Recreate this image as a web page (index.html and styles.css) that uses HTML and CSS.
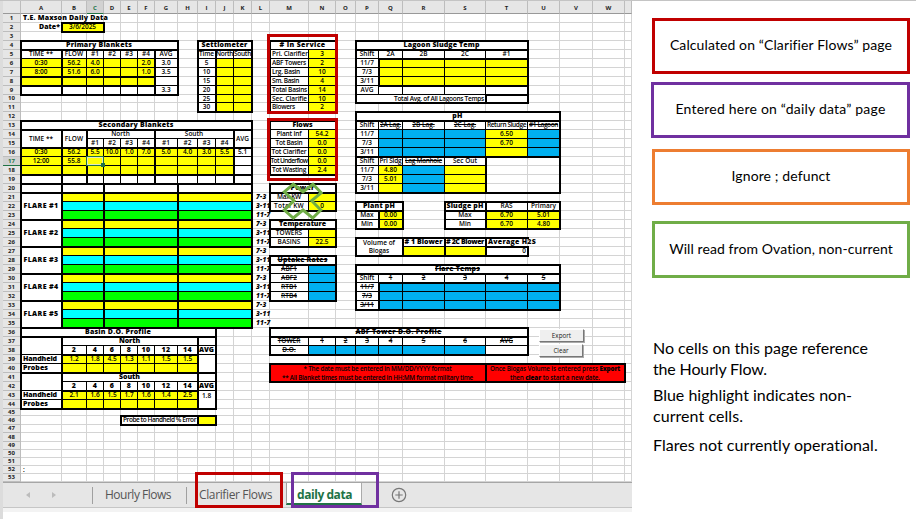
FILE: index.html
```html
<!DOCTYPE html>
<html lang="en">
<head>
<meta charset="utf-8">
<title>Daily data</title>
<link rel="stylesheet" href="styles.css">
</head>
<body>
<div class="page">
  <main class="workbook">
    <div class="sheet" id="sheet"></div>
    <div class="tabs">
      <span class="arrow prev"></span><span class="arrow next"></span>
      <span class="tab hourly"><span data-w="66">Hourly Flows</span></span>
      <span class="tab clarifier"><span data-w="73">Clarifier Flows</span></span>
      <span class="tab active"><span data-w="55">daily data</span></span>
      <svg class="add" width="16" height="16" viewBox="0 0 16 16"><circle cx="8" cy="8" r="6.7"/><path d="M8 4.3v7.4M4.3 8h7.4"/></svg>
    </div>
    <div class="foot"></div>
    <button class="btn export">Export</button>
    <button class="btn clear">Clear</button>
    <div class="mark service"></div>
    <div class="mark flows"></div>
    <div class="mark tab-red"></div>
    <div class="mark tab-purple"></div>
    <svg class="cross" width="42" height="40" viewBox="0 0 42 40"><path d="M3.3 11.8 12.3 4.2 22 11.8 32 4.2 40.2 12.8 30.7 20.7 39.8 30 31.7 38 22 30 12.3 38 3.3 30 13 20.7Z"/></svg>
  </main>
  <aside class="notes">
    <div class="key red"><span data-w="222">Calculated on “Clarifier Flows” page</span></div>
    <div class="key purple"><span data-w="210">Entered here on “daily data” page</span></div>
    <div class="key orange"><span data-w="99">Ignore ; defunct</span></div>
    <div class="key green"><span data-w="224">Will read from Ovation, non-current</span></div>
    <p class="n1"><span data-w="215">No cells on this page reference</span><br><span data-w="114">the Hourly Flow.</span></p>
    <p class="n2"><span data-w="199">Blue highlight indicates non-</span><br><span data-w="90">current cells.</span></p>
    <p class="n3"><span data-w="225">Flares not currently operational.</span></p>
  </aside>
</div>
<script src="sheet.js"></script>
</body>
</html>
```
FILE: styles.css
```css
* { box-sizing: border-box; }
body { margin: 0; background: #fff; font-family: "Open Sans", "Liberation Sans", sans-serif; color: #000; }
.page { display: flex; width: 916px; height: 519px; overflow: hidden; border-top: 1px solid #c4c4c4; }
.workbook { position: relative; width: 632px; height: 518px; flex: none; border-left: 3px solid #dcdcdc; }

.sheet { display: grid; width: 629px; height: 481px; overflow: hidden; font-size: 6.5px; line-height: 8px; font-weight: 600; }
.grid { background: #fff; border: 0 solid #d4d4d4; border-width: 0 1px 1px 0; }
.head { background: #e6e6e6; border: 0 solid #bdbdbd; border-width: 0 1px 1px 0; display: flex; align-items: center; justify-content: center; font-weight: 700; font-size: 6px; line-height: 7px; color: #222; }
.head.col { padding-top: 3px; border-bottom-color: #999; }
.head.on { background: #d2d2d2; color: #217346; border-color: #217346; }
.head.col.on { border-right-color: #bdbdbd; }
.c { display: flex; align-items: center; justify-content: center; text-align: center; margin: -1px 0 0 -1px; border: 1px solid #000; background: #fff; white-space: nowrap; overflow: hidden; min-width: 0; min-height: 0; }
.y { background: #ff0; }
.u { background: #00b0f0; }
.q { background: #0ff; }
.g { background: #0f0; }
.r { background: #f00; }
.b { font-weight: 800; font-size: 7px; letter-spacing: .3px; }
.s { text-decoration: line-through; }
.i { font-style: italic; font-weight: 800; }
.l { justify-content: flex-start; text-align: left; padding-left: 2px; }
.e { justify-content: flex-end; padding-right: 1px; }
.n { border-color: transparent; background: transparent; overflow: visible; }
.shift { padding-left: 4px; letter-spacing: .3px; }
.wrap { line-height: 8px; white-space: pre; }
.note { flex-direction: column; line-height: 9px; font-size: 6.3px; }
.box { border: 2px solid #000; margin: -1px; z-index: 1; }
.top { border-top: 2px solid #000; margin: -1px; z-index: 1; }
.sel { border: 1px solid #217346; margin: -1px 0 0 -1px; z-index: 2; position: relative; box-shadow: inset 0 0 0 1px #dfe8c0; }
.sel::after { content: ""; position: absolute; right: -2px; bottom: -2px; width: 4px; height: 4px; background: #217346; }

.tabs { display: flex; align-items: center; height: 26px; width: 629px; background: #e6e6e6; border-top: 1px solid #a6a6a6; border-bottom: 1px solid #c6c6c6; font-size: 12px; color: #555; position: relative; }
.tab { display: flex; align-items: center; height: 17px; white-space: nowrap; border-left: 1px solid #a0a0a0; }
.arrow { width: 0; height: 0; border: 3.5px solid transparent; }
.prev { border-right: 4px solid #bcbcbc; border-left: 0; margin-left: 23px; }
.next { border-left: 4px solid #bcbcbc; border-right: 0; margin-left: 22px; }
.hourly { margin-left: 36px; width: 94px; padding: 0 0 2px 12px; }
.clarifier { width: 98px; padding: 0 0 2px 12px; }
.active { margin-left: 2px; width: 76px; height: 22px; align-self: flex-start; background: #fff; color: #217346; font-weight: 700; border-bottom: 2px solid #217346; border-right: 1px solid #aaa; padding: 3px 0 0 10px; }
.add { margin-left: 29px; fill: none; stroke: #777; stroke-width: 1.2; }
.foot { height: 4px; width: 629px; background: #f3f3f3; }

.btn { position: absolute; left: 536px; width: 45px; height: 13px; padding: 0; background: #efefef; border: 1px solid #fff; border-right-color: #777; border-bottom-color: #777; box-shadow: 1px 1px 0 #aaa; font: 6.3px/10px "Open Sans", sans-serif; color: #222; z-index: 3; }
.export { top: 328px; }
.clear { top: 343px; width: 44px; }
.mark { position: absolute; border: 3px solid #c00000; z-index: 4; }
.service { left: 264px; top: 33px; width: 71px; height: 80px; }
.flows { left: 264px; top: 117px; width: 71px; height: 63px; }
.tab-red { left: 192px; top: 471px; width: 88px; height: 36px; }
.tab-purple { left: 288px; top: 471px; width: 88px; height: 36px; border-color: #7030a0; }
.cross { position: absolute; left: 278px; top: 179px; z-index: 4; fill: none; stroke: #70ad47; stroke-width: 3; }

.notes { width: 284px; padding: 17px 0 0 19px; font-family: Lato, "Open Sans", sans-serif; }
.key { display: flex; align-items: center; justify-content: center; width: 258px; height: 56px; margin-left: 1px; padding-bottom: 3px; border: 3px solid #c00000; font-size: 14px; white-space: nowrap; }
.purple { width: 259px; margin: 8px 0 0; border-color: #7030a0; }
.orange { margin-top: 11px; border-color: #ed7d31; }
.green { height: 57px; margin-top: 16px; border-color: #70ad47; }
.notes p { margin: 0 0 0 2px; font-size: 16px; line-height: 21px; white-space: nowrap; }
.notes .n1 { margin-top: 59px; }
.notes .n2 { margin-top: 5px; }
.notes .n3 { margin-top: 8px; }
```
FILE: sheet.js
```js
const colEdges = [3, 21, 62, 87, 104, 121, 138, 155, 178, 198, 216, 234, 252, 270, 309, 336, 356, 379, 403, 445, 486, 528, 560, 593, 625, 632];
const rowEdges = [1, 14, 23, 32, 41, 50, 59, 68, 77, 86, 95, 103, 112, 121, 130, 139, 148, 157, 166, 175, 184, 193, 202, 211, 220, 229, 238, 247, 256, 265, 274, 283, 292, 301, 310, 319, 328, 337, 346, 355, 364, 373, 382, 391, 400, 409, 416, 425, 433, 442, 450, 458, 466, 474, 482];
const sheet = document.getElementById('sheet');
const sizes = edges => edges.slice(1).map((v, i) => v - edges[i] + 'px').join(' ');
sheet.style.gridTemplateColumns = sizes(colEdges);
sheet.style.gridTemplateRows = sizes(rowEdges);
const L = 'ABCDEFGHIJKLMNOPQRSTUVWX';

function add(r1, c1, r2, c2, cls, text, w) {
  const d = document.createElement('div');
  d.className = cls;
  d.style.gridArea = `${r1 + 1}/${c1 + 1}/${r2 + 2}/${c2 + 2}`;
  if (text) {
    const lines = Array.isArray(w) ? text.split('\n') : [text];
    lines.forEach((line, i) => {
      const s = document.createElement('span');
      s.innerHTML = line;
      const width = Array.isArray(w) ? w[i] : w;
      if (width) s.dataset.w = width;
      d.append(s);
    });
  }
  sheet.append(d);
}
const ref = s => [+s.slice(1), L.indexOf(s[0]) + 1];
function put(range, cls, text, w) {
  const [a, b = a] = range.split(':');
  const [r1, c1] = ref(a), [r2, c2] = ref(b);
  add(r1, c1, r2, c2, cls, text, w);
}
const cell = (range, text, cls = '', w) => put(range, 'c ' + cls, text, w);
const box = (...ranges) => ranges.forEach(r => put(r, 'box'));
// Consecutive cells of one row, starting at the given cell
function row(start, texts, cls = '') {
  const [r, c] = ref(start);
  texts.forEach((t, i) => add(r, c + i, r, c + i, 'c ' + cls, t));
}
function column(start, texts, cls = '', widths = []) {
  const [r, c] = ref(start);
  texts.forEach((t, i) => add(r + i, c, r + i, c, 'c ' + cls, t, widths[i]));
}

for (let r = 0; r <= 53; r++) for (let c = 0; c <= 24; c++) {
  if (!r) add(r, c, r, c, 'head col' + (c === 3 ? ' on' : ''), c && c < 24 ? L[c - 1] : '');
  else if (!c) add(r, c, r, c, 'head' + (r === 17 ? ' on' : ''), String(r));
  else add(r, c, r, c, 'grid');
}

cell('A1:D1', 'T.E. Maxson Daily Data', 'n b l', 85);
cell('A2', 'Date*', 'n b e', 21);
cell('B2:C2', '3/6/2025', 'y', 27); box('B2:C2');
cell('A52', ':', 'n l');

cell('A4:G4', 'Primary Blankets', 'b', 66);
row('A5', ['TIME **', 'FLOW', '#1', '#2', '#3', '#4', 'AVG']);
row('A6', ['0:30', '56.2', '4.0', '', '', '2.0'], 'y');
row('A7', ['8:00', '51.6', '6.0', '', '', '1.0'], 'y');
row('A8', ['', '', '', '', '', ''], 'y');
row('A9', ['', '', '', '', '', '']);
column('G6', ['3.0', '3.5', '', '3.3']);
box('A4:G4', 'A5:G9', 'A5:A9', 'G5:G9', 'A8:F8');

cell('I4:K4', 'Settlometer', 'b', 46);
column('I5', ['Time', '5', '10', '15', '20', '25', '30'], '', [15]);
column('J5', ['North'], '', [17]); column('K5', ['South'], '', [17]);
['J6', 'K6'].forEach(s => column(s, ['', '', '', '', '', ''], 'y'));
box('I4:K4', 'I5:K11', 'I5:I11');

cell('M4:N4', '# In Service', 'b', 46);
column('M5', ['Pri. Clarifier', 'ABF Towers', 'Lrg. Basin', 'Sm. Basin', 'Total Basins', 'Sec. Clarifie', 'Blowers'], 'l', [36, 34, 28, 27, 35, 35, 23]);
column('N5', ['3', '2', '10', '4', '14', '10', '2'], 'y');
box('M4:N11');

cell('P4:T4', 'Lagoon Sludge Temp', 'b', 76);
row('P5', ['Shift', '2A', '2B', '2C', '#1']);
column('P6', ['11/7', '7/3', '3/11', 'AVG']);
for (const r of [6, 7, 8]) row('Q' + r, ['', '', '', ''], 'y');
row('Q9', ['', '', '', '']);
cell('P10:S10', 'Total Avg. of All Lagoons Temps', 'e', 90);
cell('T10', '');
box('P4:T4', 'P5:T10', 'Q6:T8', 'T10');

cell('P12:U12', 'pH', 'b');
row('P13', ['Shift']);
column('Q13', ['2A Lag.'], 's', [21]); row('R13', ['2B Lag.', '2C Lag.'], 's');
cell('T13', 'Return Sludge', '', 39);
cell('U13', '#1 Lagoon', 's', 29);
column('P14', ['11/7', '7/3', '3/11', 'Shift', '11/7', '7/3', '3/11']);
for (const r of [14, 15, 16]) { row('Q' + r, ['', '', ''], 'u'); cell('U' + r, '', 'u'); }
column('T14', ['6.50', '6.70', ''], 'y');
cell('Q17', 'Pri Sldg', '', 22); cell('R17', 'Lag Manhole', 's', 37); cell('S17', 'Sec Out', '', 24);
column('Q18', ['4.80', '5.01', ''], 'y');
column('R18', ['', '', ''], 'u');
column('S18', ['', '', ''], 'y');
box('P12:U12', 'P13:U20', 'P17:S20', 'P13:U16');

cell('A13:K13', 'Secondary Blankets', 'b', 75);
cell('A14:A15', 'TIME **'); cell('B14:B15', 'FLOW');
cell('C14:F14', 'North'); cell('G14:J14', 'South'); cell('K14:K15', 'AVG');
row('C15', ['#1', '#2', '#3', '#4', '#1', '#2', '#3', '#4']);
row('A16', ['0:30', '56.2', '5.5', '10.0', '1.0', '7.0', '5.0', '4.0', '3.0', '5.5'], 'y');
row('A17', ['12:00', '55.8', '', '', '', '', '', '', '', ''], 'y');
row('A18', ['', '', '', '', '', '', '', '', '', ''], 'y');
row('A19', ['', '', '', '', '', '', '', '', '', '']);
column('K16', ['5.1', '', '', '']);
box('A13:K13', 'A14:K19', 'A14:A19', 'C14:F19', 'K14:K19', 'A16:K18');
put('C17', 'sel');

['A20', 'B20:C20', 'D20:G20', 'H20:K20'].forEach(r => cell(r, ''));
const shifts = ['7-3', '3-11', '11-7'];
for (let f = 0; f < 5; f++) {
  const r = 21 + f * 3;
  cell(`A${r}:A${r + 2}`, 'FLARE #' + (f + 1), 'b', 35);
  ['y', 'q', 'g'].forEach((k, i) => {
    ['B#:C#', 'D#:G#', 'H#:K#'].forEach(t => cell(t.replace(/#/g, r + i), '', k));
    cell(`L${r + i}`, shifts[i], 'n i l shift');
  });
  box(`A${r}:K${r + 2}`);
}
box('A20:K20', 'B20:C35', 'D20:G35', 'H20:K35');

cell('M13:N13', 'Flows', 'b', 20);
column('M14', ['Plant Inf', 'Tot Basin', 'Tot Clarifier', 'Tot Underflow', 'Tot Wasting'], '', [25, 27, 35, 37, 34]);
column('N14', ['54.2', '0.0', '0.0', '0.0', '2.4'], 'y');
box('M13:N18');
cell('M20:N20', 'Power', 'b', 24);
column('M21', ['Max KW', 'Total KW'], '', [24, 30]); column('N21', ['', '0'], 'y');
box('M20:N20', 'M21:N22');
cell('M24:N24', 'Temperature', 'b', 47);
column('M25', ['TOWERS', 'BASINS']); column('N25', ['', '22.5'], 'y');
box('M24:N24', 'M25:N26');
cell('M28:N28', 'Uptake Rates', 'b s', 50);
column('M29', ['ABF1', 'ABF2', 'RTB1', 'RTB4'], 's'); column('N29', ['', '', '', ''], 'u');
box('M28:N28', 'M29:N32');

cell('P22:Q22', 'Plant pH', 'b', 32);
column('P23', ['Max', 'Min']); column('Q23', ['0.00', '0.00'], 'y');
box('P22:Q22', 'P23:Q24', 'Q23:Q24');
cell('S22', 'Sludge pH', 'b', 37); cell('T22', 'RAS'); cell('U22', 'Primary');
row('S23', ['Max']); row('T23', ['6.70', '5.01'], 'y');
row('S24', ['Min']); row('T24', ['6.70', '4.80'], 'y');
box('S22:U24', 'T23:U24', 'S22');

cell('P26:Q27', 'Volume of\nBiogas', 'wrap');
cell('R26', '# 1 Blower', 'b', 38); cell('S26', '# 2C Blower', 'b', 38);
cell('T26:U26', 'Average H2S', 'n b l', 48);
row('R27', ['', ''], 'y'); cell('T27', '0', 'e');
box('P26:Q27', 'R26:R27', 'S26:S27', 'T27');
put('T26', 'top');

cell('P29:U29', 'Flare Temps', 'b s', 45);
row('P30', ['Shift']); row('Q30', ['1', '2', '3', '4', '5'], 's');
column('P31', ['11/7', '7/3', '3/11'], 's');
for (const r of [31, 32, 33]) row('Q' + r, ['', '', '', '', ''], 'u');
box('P29:U29', 'P30:U33', 'Q31:U33');

cell('M36:T36', 'ABF Tower D.O. Profile', 'b s', 86);
row('M37', ['TOWER', '1', '2', '3', '4', '5', '6', 'AVG'], 's');
row('M38', ['D.O.'], 's'); row('N38', ['', '', '', '', '', ''], 'u'); cell('T38', '');
box('M36:T36', 'M37:T38');

cell('M40:S41', '* The date must be entered in MM/DD/YYYY format\n** All Blanket times must be entered in HH:MM format military time', 'r note', [148, 191]);
cell('T40:W41', 'Once Biogas Volume is entered press <b>Export</b>\nthen <b>clear</b> to start a new date.', 'r note', [130, 90]);
box('M40:S41', 'T40:W41');

cell('A36:I36', 'Basin D.O. Profile', 'b', 66);
[[37, 'North', ['1.2', '1.8', '4.5', '1.3', '1.1', '1.5', '1.5'], ''], [41, 'South', ['2.1', '1.6', '1.5', '1.7', '1.6', '1.4', '2.5'], '1.8']].forEach(([r, name, v, avg]) => {
  cell(`A${r}:A${r + 1}`, ''); cell(`B${r}:H${r}`, name, 'b', 21);
  row('B' + (r + 1), ['2', '4', '6', '8', '10', '12', '14'], 'b');
  cell('I' + r, ''); cell('I' + (r + 1), 'AVG', 'b', 15);
  cell('A' + (r + 2), 'Handheld', 'b l', 34); cell('A' + (r + 3), 'Probes', 'b l', 25);
  row('B' + (r + 2), v, 'y'); row('B' + (r + 3), ['', '', '', '', '', '', ''], 'y');
  cell(`I${r + 2}:I${r + 3}`, avg && avg + '\n ', 'wrap');
  box(`A${r}:A${r + 3}`, `B${r}:H${r + 1}`, `B${r + 2}:H${r + 3}`, `I${r}:I${r + 3}`);
});
box('A36:I36');
cell('E46:H46', 'Probe to Handheld % Error', 'l', 73); cell('I46', '', 'y');
box('E46:H46', 'I46');

// Track each marked label out to its set width
document.querySelectorAll('[data-w]').forEach(s => {
  const n = s.textContent.length;
  const now = parseFloat(getComputedStyle(s).letterSpacing) || 0;
  s.style.letterSpacing = now + (s.dataset.w - s.getBoundingClientRect().width) / n + 'px';
});
```
